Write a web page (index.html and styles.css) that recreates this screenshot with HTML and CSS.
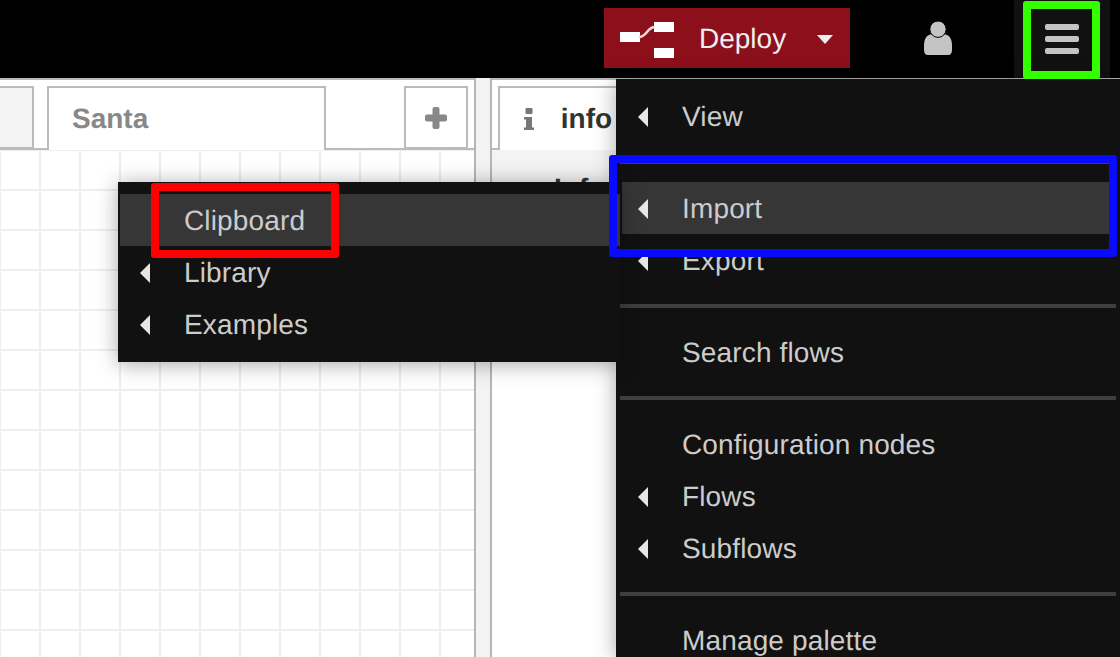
FILE: index.html
```html
<!DOCTYPE html>
<html lang="en">
<head>
  <meta charset="UTF-8">
  <title>Node-RED</title>
  <link rel="stylesheet" href="styles.css">
</head>
<body>

<div class="header">
  <div class="deploy">
    <svg class="deploy-icon" width="54" height="40" viewBox="0 0 54 40">
      <rect x="0" y="14" width="20" height="10" fill="#fff"/>
      <rect x="34" y="4" width="20" height="10" fill="#fff"/>
      <rect x="34" y="30" width="20" height="10" fill="#fff"/>
      <path d="M19 19 C27 19 27 9 35 9" fill="none" stroke="#f0dcdc" stroke-width="2.5"/>
    </svg>
    <span class="deploy-label">Deploy</span>
    <span class="caret"></span>
  </div>
  <div class="user">
    <svg width="30" height="36" viewBox="0 0 30 36">
      <path d="M6 14 C10 12 20 12 24 14 C28 16 29 20 29 25 V29 Q29 34 25 34 H5 Q1 34 1 29 V25 C1 20 2 16 6 14 Z" fill="#c4c4c4"/>
      <circle cx="15" cy="8.2" r="8.2" fill="#c4c4c4" stroke="#000" stroke-width="1"/>
    </svg>
  </div>
  <div class="menu-btn">
    <span></span>
    <span></span>
    <span></span>
  </div>
</div>

<div class="workspace">
  <div class="canvas-pane">
    <div class="tabs">
      <div class="tab tab-old"></div>
      <div class="tab tab-active">Santa</div>
      <div class="tab-add">
        <svg width="22" height="22" viewBox="0 0 22 22">
          <rect x="7.5" y="0" width="7" height="22" rx="2" fill="#888"/>
          <rect x="0" y="7.5" width="22" height="7" rx="2" fill="#888"/>
        </svg>
      </div>
    </div>
    <div class="grid"></div>
  </div>
  <div class="splitter"></div>
  <div class="sidebar">
    <div class="tabs">
      <div class="tab tab-info">
        <svg class="info-i" width="10" height="22" viewBox="0 0 10 22">
          <rect x="1.5" y="0" width="7" height="6" rx="1" fill="#777"/>
          <path d="M0 9 H8 V19.5 H10 V22 H0 V19.5 H2 V11.5 H0 Z" fill="#777"/>
        </svg>
        info
      </div>
    </div>
    <div class="info-body">Info</div>
  </div>
</div>

<div class="menu main-menu">
  <div class="item"><span class="arrow"></span>View</div>
  <div class="sep"></div>
  <div class="item active"><span class="arrow"></span>Import</div>
  <div class="item"><span class="arrow"></span>Export</div>
  <div class="sep"></div>
  <div class="item">Search flows</div>
  <div class="sep"></div>
  <div class="item">Configuration nodes</div>
  <div class="item"><span class="arrow"></span>Flows</div>
  <div class="item"><span class="arrow"></span>Subflows</div>
  <div class="sep"></div>
  <div class="item">Manage palette</div>
</div>

<div class="menu sub-menu">
  <div class="item active">Clipboard</div>
  <div class="item"><span class="arrow"></span>Library</div>
  <div class="item"><span class="arrow"></span>Examples</div>
</div>

<div class="mark mark-green"></div>
<div class="mark mark-blue"></div>
<div class="mark mark-red"></div>

</body>
</html>
```

FILE: styles.css
```css
html, body {
  margin: 0;
  padding: 0;
  width: 1120px;
  height: 657px;
  overflow: hidden;
  background: #fff;
  font-family: "Liberation Sans", Arial, sans-serif;
  text-rendering: geometricPrecision;
}

.header {
  display: flex;
  align-items: flex-start;
  height: 78px;
  background: #000;
}

.deploy {
  display: flex;
  align-items: center;
  width: 246px;
  height: 60px;
  margin: 8px 0 0 604px;
  background: #8c101c;
  color: #eee;
}

.deploy-icon {
  margin-left: 16px;
}

.deploy-label {
  margin-left: 25px;
  padding-top: 2px;
  font-size: 28px;
}

.caret {
  margin: 3px 0 0 31px;
  border-top: 9px solid #eee;
  border-left: 8px solid transparent;
  border-right: 8px solid transparent;
}

.user {
  display: flex;
  justify-content: center;
  width: 60px;
  padding-top: 21px;
  margin-left: 58px;
}

.menu-btn {
  display: flex;
  flex-direction: column;
  justify-content: center;
  gap: 6px;
  box-sizing: border-box;
  width: 96px;
  height: 78px;
  margin-left: 46px;
  padding: 0 31px;
  background: #111;
}

.menu-btn span {
  display: block;
  height: 6px;
  border-radius: 2px;
  background: #c4c4c4;
}

.workspace {
  display: flex;
  height: 579px;
}

.canvas-pane {
  width: 474px;
}

.splitter {
  width: 14px;
  background: #f3f3f3;
  border-left: 2px solid #b5b5b5;
  border-right: 2px solid #b5b5b5;
}

.sidebar {
  flex: 1;
  background: #fff;
}

.tabs {
  display: flex;
  box-sizing: border-box;
  height: 72px;
  padding-top: 8px;
  background: #fff;
  border-top: 2px solid #bbb;
  border-bottom: 2px solid #bbb;
}

.tab {
  box-sizing: border-box;
  height: 64px;
  margin-top: -2px;
  border: 2px solid #bbb;
  border-bottom: none;
  background: #fff;
  font-weight: bold;
  font-size: 28px;
  line-height: 62px;
}

.tab-old {
  width: 34px;
  height: 63px;
  margin-right: 13px;
  border-left: none;
  border-bottom: 2px solid #bbb;
  background: #f3f3f3;
}

.tab-active {
  width: 279px;
  padding-left: 23px;
  color: #888;
}

.tab-add {
  display: flex;
  align-items: center;
  justify-content: center;
  box-sizing: border-box;
  width: 64px;
  height: 63px;
  margin: -2px 6px 0 78px;
  border: 2px solid #bbb;
}

.tab-info {
  width: 200px;
  margin-left: 6px;
  color: #333;
}

.info-i {
  margin: 0 19px 0 24px;
  vertical-align: -2px;
}

.grid {
  height: 507px;
  background-color: #fff;
  background-image:
    linear-gradient(to right, #eee 2px, transparent 2px),
    linear-gradient(to bottom, #eee 2px, transparent 2px);
  background-size: 40px 40px;
  background-position: -1px -1px;
}

.info-body {
  height: 170px;
  padding: 23px 0 0 62px;
  box-sizing: border-box;
  background: #f3f3f3;
  font-weight: bold;
  font-size: 28px;
  color: #333;
}

.menu {
  position: absolute;
  background: #111;
  box-shadow: 0 2px 20px rgba(0, 0, 0, 0.35);
  color: #ccc;
  font-size: 28px;
  letter-spacing: 0.15px;
}

.main-menu {
  left: 616px;
  top: 79px;
  width: 504px;
  height: 578px;
  padding-top: 11px;
  box-sizing: border-box;
}

.sub-menu {
  left: 118px;
  top: 182px;
  width: 502px;
  height: 180px;
  padding-top: 12px;
  box-sizing: border-box;
}

.item {
  position: relative;
  height: 52px;
  line-height: 54px;
  padding-left: 66px;
}

.main-menu .item.active {
  margin-left: 6px;
  margin-right: 4px;
  padding-left: 60px;
}

.main-menu .item.active .arrow {
  left: 16px;
}

.sub-menu .item {
  margin-left: 2px;
  padding-left: 64px;
}

.sub-menu .arrow {
  left: 20px;
}

.item.active {
  background: #363636;
}

.arrow {
  position: absolute;
  left: 22px;
  top: 17px;
  border-right: 10px solid #e6e6e6;
  border-top: 10px solid transparent;
  border-bottom: 10px solid transparent;
}

.sep {
  height: 4px;
  margin: 18px 4px;
  background: #3f3f3f;
}

.mark {
  position: absolute;
  box-sizing: border-box;
  border-width: 8px;
  border-style: solid;
  border-radius: 3px;
}

.mark-green {
  left: 1023px;
  top: 1px;
  width: 77px;
  height: 78px;
  border-color: #33ff00;
}

.mark-blue {
  left: 609px;
  top: 155px;
  width: 508px;
  height: 102px;
  border-color: #0a0aff;
}

.mark-red {
  left: 151px;
  top: 183px;
  width: 188px;
  height: 75px;
  border-color: #ff0000;
}
```
